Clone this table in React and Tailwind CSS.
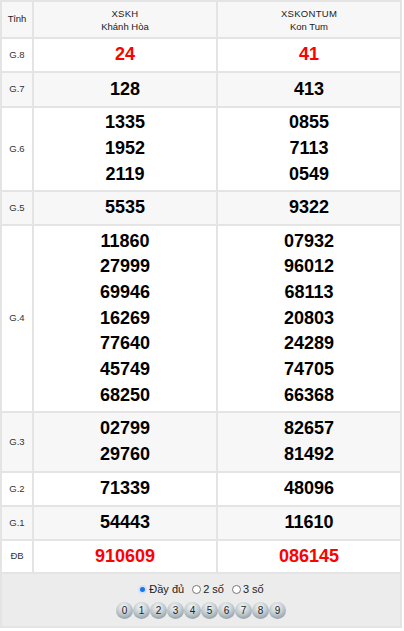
import React from 'react';

const ROWS = [
    { label: 'G.8', h: 'h-[32px]', bg: 'bg-white', red: true, a: ['24'], b: ['41'] },
    { label: 'G.7', h: 'h-[33px]', bg: 'bg-[#f7f7f7]', a: ['128'], b: ['413'] },
    { label: 'G.6', h: 'h-[82px]', bg: 'bg-white', a: ['1335', '1952', '2119'], b: ['0855', '7113', '0549'] },
    { label: 'G.5', h: 'h-[32px]', bg: 'bg-[#f7f7f7]', a: ['5535'], b: ['9322'] },
    {
        label: 'G.4',
        h: 'h-[185px]',
        bg: 'bg-white',
        a: ['11860', '27999', '69946', '16269', '77640', '45749', '68250'],
        b: ['07932', '96012', '68113', '20803', '24289', '74705', '66368'],
    },
    { label: 'G.3', h: 'h-[58px]', bg: 'bg-[#f7f7f7]', a: ['02799', '29760'], b: ['82657', '81492'] },
    { label: 'G.2', h: 'h-[32px]', bg: 'bg-white', a: ['71339'], b: ['48096'] },
    { label: 'G.1', h: 'h-[32px]', bg: 'bg-[#f7f7f7]', a: ['54443'], b: ['11610'] },
    { label: 'ĐB', h: 'h-[31px]', bg: 'bg-white', red: true, a: ['910609'], b: ['086145'] },
];

const Radio = ({ checked, label }) => (
    <span className="flex items-center gap-[2px]">
        {checked ? (
            <span className="w-[9px] h-[9px] rounded-full bg-[#1a73e8] border-[2px] border-[#cfe1fb] box-border" />
        ) : (
            <span className="w-[9px] h-[9px] rounded-full bg-white border border-[#767676] box-border" />
        )}
        <span>{label}</span>
    </span>
);

const NumberCell = ({ values, red, bg }) => (
    <div className={`${bg} flex flex-col items-center justify-center`}>
        {values.map(v => (
            <span
                key={v}
                className={`text-[18px] font-bold leading-[25.7px] ${red ? 'text-[#ff0000]' : 'text-black'}`}
            >
                {v}
            </span>
        ))}
    </div>
);

export default function App() {
    return (
        <div className="w-[404px] bg-white font-['Liberation_Sans',Arial,sans-serif]">
            <div className="w-[402px] bg-[#e4e4e4] p-[2px] flex flex-col gap-[2px]">
                {/* Header */}
                <div className="grid grid-cols-[30px_182px_182px] gap-[2px] h-[35px]">
                    <div className="bg-[#f7f7f7] flex items-center justify-center text-[9.5px] text-[#222]">
                        Tỉnh
                    </div>
                    <div className="bg-[#f7f7f7] flex flex-col items-center justify-center text-[9.5px] leading-[13px] text-[#222]">
                        <span className="tracking-[0.3px]">XSKH</span>
                        <span>Khánh Hòa</span>
                    </div>
                    <div className="bg-[#f7f7f7] flex flex-col items-center justify-center text-[9.5px] leading-[13px] text-[#222]">
                        <span className="tracking-[0.3px]">XSKONTUM</span>
                        <span>Kon Tum</span>
                    </div>
                </div>

                {/* Prize rows */}
                {ROWS.map(row => (
                    <div key={row.label} className={`grid grid-cols-[30px_182px_182px] gap-[2px] ${row.h}`}>
                        <div className={`${row.bg} flex items-center justify-center text-[9.5px] text-[#333]`}>
                            {row.label}
                        </div>
                        <NumberCell values={row.a} red={row.red} bg={row.bg} />
                        <NumberCell values={row.b} red={row.red} bg={row.bg} />
                    </div>
                ))}

                {/* Footer */}
                <div className="h-[52px] bg-[#ececec] flex flex-col items-center pt-[9px] gap-[7px]">
                    <div className="flex items-center gap-[8px] text-[11px] leading-[12px] text-[#222]">
                        <Radio checked label="Đầy đủ" />
                        <Radio label="2 số" />
                        <Radio label="3 số" />
                    </div>
                    <div className="flex">
                        {['0', '1', '2', '3', '4', '5', '6', '7', '8', '9'].map(n => (
                            <span
                                key={n}
                                className="w-[17px] h-[17px] rounded-full flex items-center justify-center text-[10px] text-[#222] bg-[radial-gradient(circle_at_45%_30%,#f6f8f9_0%,#c3ccd1_45%,#8c9aa2_85%,#76858d_100%)]"
                            >
                                {n}
                            </span>
                        ))}
                    </div>
                </div>
            </div>
        </div>
    );
}
